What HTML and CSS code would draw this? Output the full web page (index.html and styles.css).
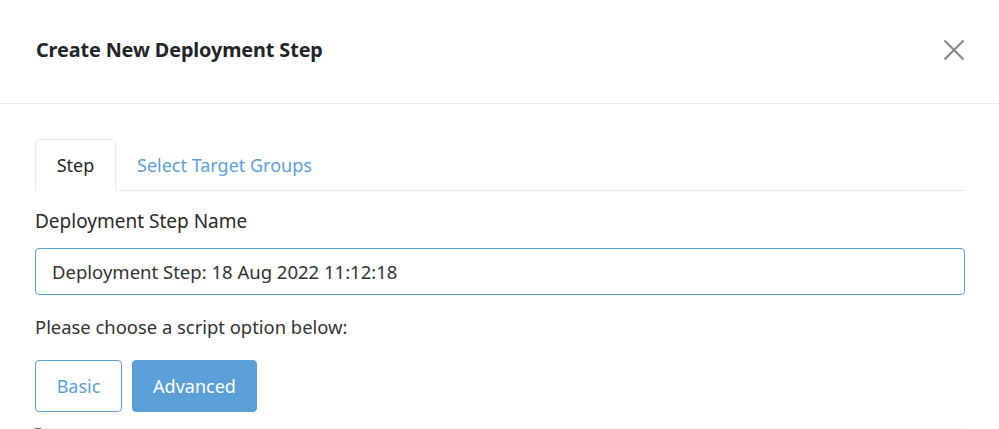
FILE: index.html
```html
<!DOCTYPE html>
<html>
<head>
<meta charset="utf-8">
<link rel="stylesheet" href="styles.css">
</head>
<body>
<div class="modal">
  <div class="modal-header">
    <h5 class="modal-title">Create New Deployment Step</h5>
    <button class="close" aria-label="Close">
      <svg width="22" height="22" viewBox="0 0 22 22"><path d="M1.5 1.5 L20.5 20.5 M20.5 1.5 L1.5 20.5" stroke="#8a8a8a" stroke-width="2.2" fill="none"/></svg>
    </button>
  </div>
  <div class="modal-body">
    <ul class="tabs">
      <li class="tab active">Step</li>
      <li class="tab link">Select Target Groups</li>
    </ul>
    <label class="label">Deployment Step Name</label>
    <div class="input">Deployment Step: 18 Aug 2022 11:12:18</div>
    <p class="hint">Please choose a script option below:</p>
    <div class="options">
      <button class="btn btn-outline">Basic</button>
      <button class="btn btn-primary">Advanced</button>
    </div>
    <div class="divider"><span class="mark"></span></div>
  </div>
</div>
</body>
</html>
```
FILE: styles.css
```css
* { box-sizing: border-box; }
html, body { margin: 0; padding: 0; background: #fff; }
body {
  font-family: "Noto Sans", "Open Sans", sans-serif;
  color: #212529;
  overflow: hidden;
}
.modal { width: 999px; height: 429px; }
.modal-header {
  height: 104px;
  border-bottom: 1px solid #e9ecef;
  display: flex;
  align-items: center;
  justify-content: space-between;
  padding: 0 34px 4px 36px;
}
.modal-title {
  margin: 0;
  font-size: 19.8px;
  font-weight: 700;
  color: #212529;
  letter-spacing: -0.1px;
}
.close {
  border: 0;
  background: none;
  padding: 0;
  width: 22px;
  height: 22px;
  display: flex;
}
.modal-body { padding: 35px 34px 0 35px; }
.tabs {
  list-style: none;
  margin: 0;
  padding: 0;
  display: flex;
  border-bottom: 1px solid #e9ecef;
  height: 52px;
}
.tab {
  font-size: 18px;
  padding: 0 21px;
  display: flex;
  align-items: center;
  height: 52px;
}
.tab.active {
  width: 81px;
  justify-content: center;
  border: 1px solid #e9ecef;
  border-bottom-color: #fff;
  border-radius: 5px 5px 0 0;
  color: #212529;
}
.tab.link { color: #5b9fd9; }
.label {
  display: block;
  font-size: 19px;
  margin-top: 17px;
  line-height: 26px;
  color: #2a2a2a;
}
.input {
  margin-top: 14px;
  height: 47px;
  border: 1px solid #5b9fd9;
  border-radius: 4px;
  padding: 0 16px;
  display: flex;
  align-items: center;
  font-size: 18.5px;
  color: #333;
}
.hint {
  margin: 19px 0 0;
  font-size: 18.4px;
  line-height: 26px;
  color: #333;
}
.options {
  display: flex;
  gap: 10px;
  margin-top: 20px;
}
.btn {
  font-family: inherit;
  font-size: 18px;
  height: 52px;
  border-radius: 4px;
  padding: 0;
  cursor: pointer;
}
.btn-outline {
  width: 87px;
  background: #fff;
  color: #5b9fd9;
  border: 1px solid #5b9fd9;
}
.btn-primary {
  width: 125px;
  background: #5b9fd9;
  color: #fff;
  border: 1px solid #5b9fd9;
}
.divider {
  margin-top: 16px;
  height: 1px;
  background: #f0f0f0;
}
.mark {
  display: block;
  width: 6px;
  height: 1px;
  background: #666;
}
```
